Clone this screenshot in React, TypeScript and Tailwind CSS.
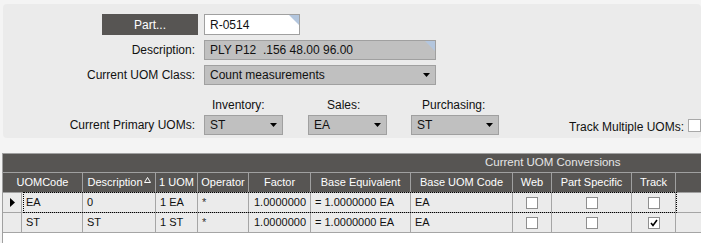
import React from "react";

const cols = [19, 61, 73, 42, 51, 62, 100, 102, 39, 80, 44, 26];

function Corner() {
  return (
    <svg className="absolute right-0 top-0" width="10" height="10" viewBox="0 0 10 10">
      <polygon points="0,0 10,0 10,10" fill="#b3c6de" />
    </svg>
  );
}

function Arrow() {
  return (
    <svg width="7" height="4" viewBox="0 0 7 4" className="ml-auto">
      <polygon points="0,0 7,0 3.5,4" fill="#000" />
    </svg>
  );
}

function Combo({ value, width }: { value: string; width: string }) {
  return (
    <div
      className={`${width} h-[20px] bg-[#c0c0c0] border border-[#a0a0a0] flex items-center pl-[5px] pr-[5px] text-[#111]`}
    >
      <span>{value}</span>
      <Arrow />
    </div>
  );
}

function Check({ checked }: { checked?: boolean }) {
  return (
    <div className="w-[12px] h-[12px] bg-white border border-[#8f8f8f] flex items-center justify-center">
      {checked && (
        <svg width="8" height="8" viewBox="0 0 8 8">
          <path d="M1 4 L3 6.5 L7 1" stroke="#000" strokeWidth="1.6" fill="none" />
        </svg>
      )}
    </div>
  );
}

type Row = { code: string; desc: string; uom: string; track: boolean; current?: boolean };

const rows: Row[] = [
  { code: "EA", desc: "0", uom: "1 EA", track: false, current: true },
  { code: "ST", desc: "ST", uom: "1 ST", track: true },
];

function DataRow({ r }: { r: Row }) {
  const cell = "h-full border-r border-[#a5a5a5] flex items-center px-[4px] shrink-0";
  return (
    <div className="relative flex h-[20px] border-b border-[#a5a5a5] bg-[#ebebeb] text-[#111]">
      <div className={cell + " justify-center"} style={{ width: cols[0] }}>
        {r.current && (
          <svg width="5" height="9" viewBox="0 0 5 9">
            <polygon points="0,0 5,4.5 0,9" fill="#000" />
          </svg>
        )}
      </div>
      <div className={cell} style={{ width: cols[1] }}>{r.code}</div>
      <div className={cell} style={{ width: cols[2] }}>{r.desc}</div>
      <div className={cell} style={{ width: cols[3] }}>{r.uom}</div>
      <div className={cell + " text-[#333]"} style={{ width: cols[4] }}>*</div>
      <div className={cell + " justify-end"} style={{ width: cols[5] }}>1.0000000</div>
      <div className={cell} style={{ width: cols[6] }}>= 1.0000000 EA</div>
      <div className={cell} style={{ width: cols[7] }}>EA</div>
      <div className={cell + " justify-center"} style={{ width: cols[8] }}><Check /></div>
      <div className={cell + " justify-center"} style={{ width: cols[9] }}><Check /></div>
      <div className={cell + " justify-center"} style={{ width: cols[10] }}><Check checked={r.track} /></div>
      <div className="h-full flex-1" />
      {r.current && (
        <div className="absolute left-[20px] top-[-1px] w-[654px] h-[21px] border border-dotted border-black pointer-events-none" />
      )}
    </div>
  );
}

export default function App() {
  const hcell = "h-full border-r border-[#a0a0a0] flex items-center justify-center shrink-0";
  return (
    <div className="w-[701px] h-[243px] overflow-hidden bg-[#f4f4f4] font-['Liberation_Sans',Arial,sans-serif] text-[12px] leading-none text-[#111]">
      <div className="pt-[4px] pl-[3px]">
        <div className="relative h-[134px] bg-[#ebebeb] rounded-[4px] pt-[10px]">
          <div className="flex gap-[6px] pl-[99px]">
            <div className="w-[96px] h-[21px] bg-[#575553] text-white flex items-center justify-center">Part...</div>
            <div className="relative w-[96px] h-[21px] bg-white border border-[#a0a0a0] flex items-center pl-[5px]">
              R-0514
              <Corner />
            </div>
          </div>
          <div className="flex items-center mt-[5px]">
            <div className="w-[192px] text-right">Description:</div>
            <div className="relative ml-[9px] w-[232px] h-[20px] bg-[#c0c0c0] border border-[#a0a0a0] flex items-center pl-[5px] whitespace-pre">
              PLY P12  .156 48.00 96.00
              <Corner />
            </div>
          </div>
          <div className="flex items-center mt-[5px]">
            <div className="w-[192px] text-right">Current UOM Class:</div>
            <div className="ml-[9px]">
              <Combo value="Count measurements" width="w-[232px]" />
            </div>
          </div>
          <div className="flex mt-[13px] h-[13px] items-center">
            <div className="ml-[209px] w-[115px]">Inventory:</div>
            <div className="w-[95px]">Sales:</div>
            <div>Purchasing:</div>
          </div>
          <div className="flex items-center mt-[4px] h-[20px]">
            <div className="w-[192px] text-right">Current Primary UOMs:</div>
            <div className="ml-[9px] flex gap-[25px]">
              <Combo value="ST" width="w-[79px]" />
              <div className="flex gap-[24px]">
                <Combo value="EA" width="w-[79px]" />
                <Combo value="ST" width="w-[88px]" />
              </div>
            </div>
            <div className="ml-auto flex items-center">
              <span className="translate-y-[2px]">Track Multiple UOMs:</span>
              <div className="ml-[4px] w-[13px] h-[13px] bg-white border border-[#a8a8a8]" />
            </div>
          </div>
        </div>
      </div>

      <div className="mt-[15px] ml-[2px] border-l border-t border-[#a0a0a0] bg-white h-[90px]">
        <div className="h-[19px] bg-[#575553] border-b border-[#a0a0a0] flex items-center pl-[482px] text-[#e6e6e6] text-[11.5px]">
          Current UOM Conversions
        </div>
        <div className="flex h-[20px] bg-[#575553] border-b border-[#a0a0a0] text-white text-[11px]">
          <div className={hcell} style={{ width: cols[0] + cols[1] }}>UOMCode</div>
          <div className={hcell} style={{ width: cols[2] }}>
            Description
            <svg width="7" height="6" viewBox="0 0 7 6" className="ml-[1px] -mt-[5px]">
              <polygon points="3.5,0.5 6.5,5.5 0.5,5.5" fill="none" stroke="#fff" strokeWidth="1" />
            </svg>
          </div>
          <div className={hcell} style={{ width: cols[3] }}>1 UOM</div>
          <div className={hcell} style={{ width: cols[4] }}>Operator</div>
          <div className={hcell} style={{ width: cols[5] }}>Factor</div>
          <div className={hcell} style={{ width: cols[6] }}>Base Equivalent</div>
          <div className={hcell} style={{ width: cols[7] }}>Base UOM Code</div>
          <div className={hcell} style={{ width: cols[8] }}>Web</div>
          <div className={hcell} style={{ width: cols[9] }}>Part Specific</div>
          <div className={hcell} style={{ width: cols[10] }}>Track</div>
          <div className="flex-1" />
        </div>
        <div className="text-[11px]">
          {rows.map((r) => (
            <DataRow key={r.code} r={r} />
          ))}
        </div>
      </div>
    </div>
  );
}
